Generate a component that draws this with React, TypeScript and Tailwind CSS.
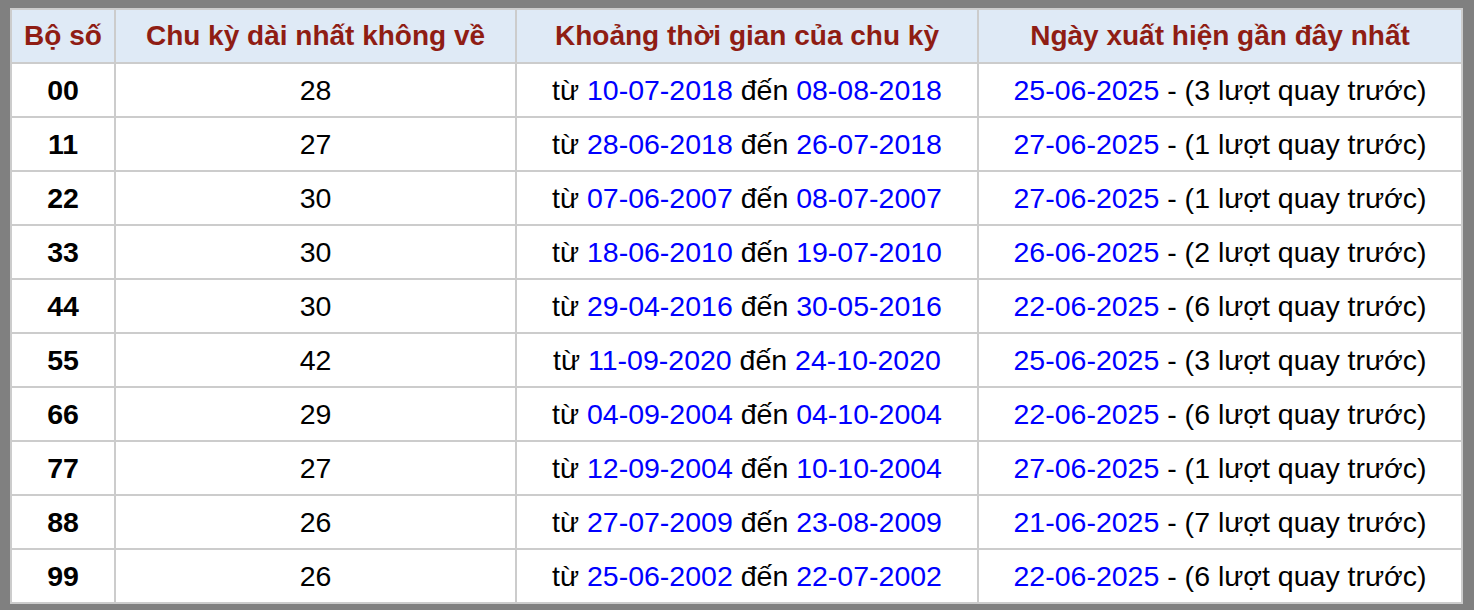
const rows = [
  { so: '00', cycle: 28, from: '10-07-2018', to: '08-08-2018', last: '25-06-2025', ago: 3 },
  { so: '11', cycle: 27, from: '28-06-2018', to: '26-07-2018', last: '27-06-2025', ago: 1 },
  { so: '22', cycle: 30, from: '07-06-2007', to: '08-07-2007', last: '27-06-2025', ago: 1 },
  { so: '33', cycle: 30, from: '18-06-2010', to: '19-07-2010', last: '26-06-2025', ago: 2 },
  { so: '44', cycle: 30, from: '29-04-2016', to: '30-05-2016', last: '22-06-2025', ago: 6 },
  { so: '55', cycle: 42, from: '11-09-2020', to: '24-10-2020', last: '25-06-2025', ago: 3 },
  { so: '66', cycle: 29, from: '04-09-2004', to: '04-10-2004', last: '22-06-2025', ago: 6 },
  { so: '77', cycle: 27, from: '12-09-2004', to: '10-10-2004', last: '27-06-2025', ago: 1 },
  { so: '88', cycle: 26, from: '27-07-2009', to: '23-08-2009', last: '21-06-2025', ago: 7 },
  { so: '99', cycle: 26, from: '25-06-2002', to: '22-07-2002', last: '22-06-2025', ago: 6 },
];

export default function App() {
  return (
    <div className="bg-[#808080] pt-2 pl-[10px] pr-[11px] pb-[9px] font-['Liberation_Sans',Arial,sans-serif]">
      <table className="w-full border-collapse bg-white text-[28.5px] text-black">
        <colgroup>
          <col className="w-[104px]" />
          <col className="w-[401px]" />
          <col className="w-[462px]" />
          <col />
        </colgroup>
        <thead>
          <tr className="bg-[#dfeaf6]">
            {['Bộ số', 'Chu kỳ dài nhất không về', 'Khoảng thời gian của chu kỳ', 'Ngày xuất hiện gần đây nhất'].map(h => (
              <th key={h} className="h-[54px] border-2 border-[#cccccc] p-0 text-center text-[28px] font-bold text-[#8f1d14]">
                {h}
              </th>
            ))}
          </tr>
        </thead>
        <tbody>
          {rows.map(r => (
            <tr key={r.so}>
              <td className="h-[54px] border-2 border-[#cccccc] p-0 text-center font-bold">{r.so}</td>
              <td className="border-2 border-[#cccccc] p-0 text-center">{r.cycle}</td>
              <td className="border-2 border-[#cccccc] p-0 text-center">
                từ <span className="text-[#0000ff]">{r.from}</span> đến <span className="text-[#0000ff]">{r.to}</span>
              </td>
              <td className="border-2 border-[#cccccc] p-0 text-center">
                <span className="text-[#0000ff]">{r.last}</span> - ({r.ago} lượt quay trước)
              </td>
            </tr>
          ))}
        </tbody>
      </table>
    </div>
  );
}
